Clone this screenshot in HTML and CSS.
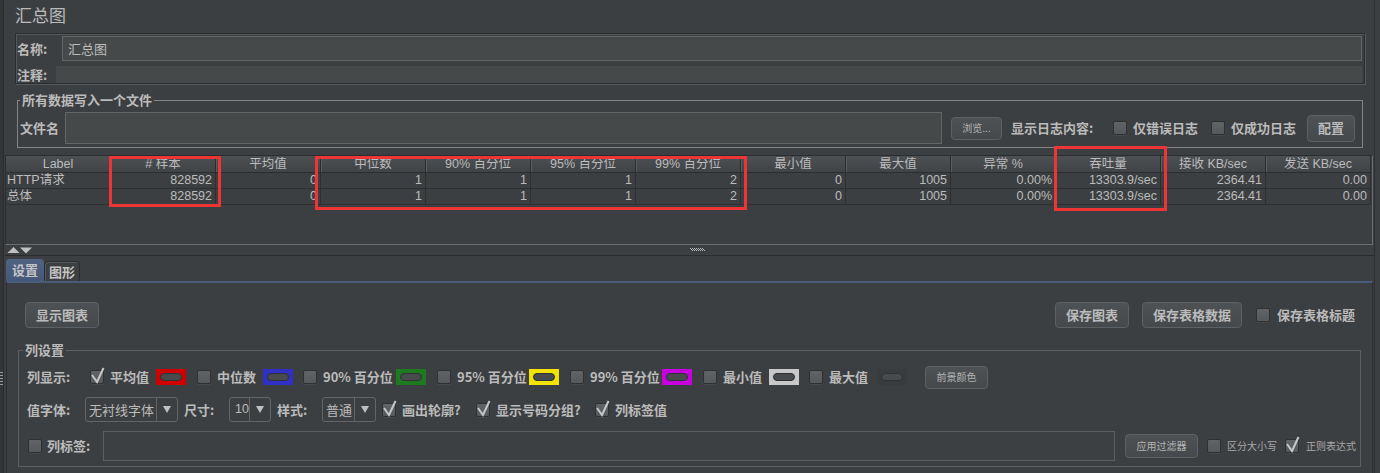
FILE: index.html
```html
<!DOCTYPE html>
<html lang="zh-CN">
<head>
<meta charset="utf-8">
<title>汇总图</title>
<link rel="stylesheet" href="styles.css">
</head>
<body>
<div class="app">
  <div class="lstrip">
    <svg class="lgrip" width="3" height="15" viewBox="0 0 3 15"><rect x="0" y="0" width="3" height="1" fill="#9a9a9a"/><rect x="0" y="3" width="3" height="1" fill="#9a9a9a"/><rect x="0" y="6" width="3" height="1" fill="#9a9a9a"/><rect x="0" y="9" width="3" height="1" fill="#9a9a9a"/><rect x="0" y="12" width="3" height="1" fill="#9a9a9a"/></svg>
  </div>
  <div class="main">
    <div class="title">汇总图</div>

    <div class="name-panel">
      <div class="nrow">
        <span class="lbl lbl-name">名称:</span>
        <div class="field field-name">汇总图</div>
      </div>
      <div class="nrow nrow-comment">
        <span class="lbl lbl-comment">注释:</span>
        <div class="field field-comment"></div>
      </div>
    </div>

    <fieldset class="group group-file">
      <legend>所有数据写入一个文件</legend>
      <div class="file-row">
        <span class="lbl lbl-file">文件名</span>
        <div class="field field-file"></div>
        <button class="btn btn-small btn-browse">浏览...</button>
        <span class="lbl lbl-log">显示日志内容:</span>
        <span class="cb"></span><span class="lbl opt-text w78">仅错误日志</span>
        <span class="cb"></span><span class="lbl opt-text w76">仅成功日志</span>
        <button class="btn btn-config">配置</button>
      </div>
    </fieldset>

    <div class="table-pane">
      <div class="trow">
        <div class="th">Label</div>
        <div class="th"># 样本</div>
        <div class="th">平均值</div>
        <div class="th">中位数</div>
        <div class="th">90% 百分位</div>
        <div class="th">95% 百分位</div>
        <div class="th">99% 百分位</div>
        <div class="th">最小值</div>
        <div class="th">最大值</div>
        <div class="th">异常 %</div>
        <div class="th">吞吐量</div>
        <div class="th">接收 KB/sec</div>
        <div class="th">发送 KB/sec</div>
      </div>
      <div class="trow">
        <div class="td left">HTTP请求</div>
        <div class="td">828592</div>
        <div class="td">0</div>
        <div class="td">1</div>
        <div class="td">1</div>
        <div class="td">1</div>
        <div class="td">2</div>
        <div class="td">0</div>
        <div class="td">1005</div>
        <div class="td">0.00%</div>
        <div class="td">13303.9/sec</div>
        <div class="td">2364.41</div>
        <div class="td">0.00</div>
      </div>
      <div class="trow">
        <div class="td left">总体</div>
        <div class="td">828592</div>
        <div class="td">0</div>
        <div class="td">1</div>
        <div class="td">1</div>
        <div class="td">1</div>
        <div class="td">2</div>
        <div class="td">0</div>
        <div class="td">1005</div>
        <div class="td">0.00%</div>
        <div class="td">13303.9/sec</div>
        <div class="td">2364.41</div>
        <div class="td">0.00</div>
      </div>
    </div>

    <div class="splitter">
      <svg class="arrows" width="26" height="7" viewBox="0 0 26 7"><polygon points="0.5,6 6.5,0 12.5,6" fill="#c0c0c0"/><polygon points="13,0.5 25,0.5 19,6.5" fill="#c0c0c0"/></svg>
      <svg class="grip" width="16" height="4" viewBox="0 0 16 4"><path d="M0 0 L3 3 M2 0 L5 3 M4 0 L7 3 M6 0 L9 3 M8 0 L11 3 M10 0 L13 3 M12 0 L15 3" stroke="#d0d0d0" stroke-width="0.8" fill="none"/></svg>
    </div>

    <div class="tabs">
      <div class="tab tab-active">设置</div>
      <div class="tab tab-inactive">图形</div>
    </div>

    <div class="tab-body">
      <div class="top-row">
        <button class="btn btn-show">显示图表</button>
        <div class="right-group">
          <button class="btn btn-save-chart">保存图表</button>
          <button class="btn btn-save-table">保存表格数据</button>
          <span class="cb ml14"></span><span class="lbl opt-text ml7">保存表格标题</span>
        </div>
      </div>

      <fieldset class="group group-cols">
        <legend>列设置</legend>
        <div class="crow crow1">
          <span class="lbl w63">列显示:</span>
          <span class="cb checked"><svg class="ck" width="16" height="18" viewBox="0 0 16 18"><path d="M2 8 L7 15 L13.5 1" fill="none" stroke="#c6c6c6" stroke-width="2"/></svg></span><span class="lbl opt-text w46">平均值</span>
          <span class="swatch sw-red"><i class="pill"></i></span>
          <span class="cb ml11"></span><span class="lbl opt-text w46">中位数</span>
          <span class="swatch sw-blue"><i class="pill"></i></span>
          <span class="cb ml10"></span><span class="lbl opt-text w73">90% 百分位</span>
          <span class="swatch sw-green"><i class="pill"></i></span>
          <span class="cb ml11"></span><span class="lbl opt-text w72">95% 百分位</span>
          <span class="swatch sw-yellow"><i class="pill"></i></span>
          <span class="cb ml11"></span><span class="lbl opt-text w72">99% 百分位</span>
          <span class="swatch sw-purple"><i class="pill"></i></span>
          <span class="cb ml11"></span><span class="lbl opt-text w46">最小值</span>
          <span class="swatch sw-gray"><i class="pill"></i></span>
          <span class="cb ml10"></span><span class="lbl opt-text w48">最大值</span>
          <span class="swatch sw-none"><i class="pill"></i></span>
          <button class="btn btn-small btn-fg">前景颜色</button>
        </div>
        <div class="crow crow2">
          <span class="lbl w58">值字体:</span>
          <span class="combo w93"><span class="combo-text">无衬线字体</span><span class="combo-arrow"><svg width="8" height="7" viewBox="0 0 8 7"><polygon points="0,0 8,0 4,7" fill="#c0c0c0"/></svg></span></span>
          <span class="lbl ml6 w45">尺寸:</span>
          <span class="combo w42"><span class="combo-text num">10</span><span class="combo-arrow"><svg width="8" height="7" viewBox="0 0 8 7"><polygon points="0,0 8,0 4,7" fill="#c0c0c0"/></svg></span></span>
          <span class="lbl ml6 w45">样式:</span>
          <span class="combo w54"><span class="combo-text">普通</span><span class="combo-arrow"><svg width="8" height="7" viewBox="0 0 8 7"><polygon points="0,0 8,0 4,7" fill="#c0c0c0"/></svg></span></span>
          <span class="cb checked ml6"><svg class="ck" width="16" height="18" viewBox="0 0 16 18"><path d="M2 8 L7 15 L13.5 1" fill="none" stroke="#c6c6c6" stroke-width="2"/></svg></span><span class="lbl opt-text w74">画出轮廓?</span>
          <span class="cb checked"><svg class="ck" width="16" height="18" viewBox="0 0 16 18"><path d="M2 8 L7 15 L13.5 1" fill="none" stroke="#c6c6c6" stroke-width="2"/></svg></span><span class="lbl opt-text w99">显示号码分组?</span>
          <span class="cb checked"><svg class="ck" width="16" height="18" viewBox="0 0 16 18"><path d="M2 8 L7 15 L13.5 1" fill="none" stroke="#c6c6c6" stroke-width="2"/></svg></span><span class="lbl opt-text">列标签值</span>
        </div>
        <div class="crow crow3">
          <span class="cb ml1"></span><span class="lbl ml5 w56">列标签:</span>
          <div class="field field-label"></div>
          <button class="btn btn-small btn-filter">应用过滤器</button>
          <span class="cb ml9"></span><span class="small-text ml6 w58">区分大小写</span>
          <span class="cb checked"><svg class="ck" width="16" height="18" viewBox="0 0 16 18"><path d="M2 8 L7 15 L13.5 1" fill="none" stroke="#c6c6c6" stroke-width="2"/></svg></span><span class="small-text ml7">正则表达式</span>
        </div>
      </fieldset>
    </div>

    <div class="redbox rb1"></div>
    <div class="redbox rb2"></div>
    <div class="redbox rb3"></div>
  </div>
  <div class="rstrip"></div>
</div>
</body>
</html>
```

FILE: styles.css
```css
* { box-sizing: border-box; }
html, body { margin: 0; padding: 0; }
body {
  width: 1380px; height: 473px; overflow: hidden;
  background: #3c3f41; color: #bbbbbb;
  font-family: "Noto Sans CJK SC", "Liberation Sans", sans-serif;
  font-size: 13px; line-height: 16px;
}
.app { display: flex; height: 473px; }
.lstrip { width: 4px; flex: none; background: #333537; border-right: 1px solid #2a2c2e; padding-top: 372px; }
.lgrip { display: block; }
.main { width: 1370px; flex: none; position: relative; }
.rstrip { width: 6px; flex: none; border-left: 1px solid #2c2e30; }

.title { height: 33px; padding: 5px 0 0 11px; font-size: 17px; line-height: 20px; }

.name-panel {
  margin-left: 11px; width: 1350px; height: 51px;
  border: 1px solid #2b2d2f;
  box-shadow: inset 1px 1px 0 #55585a, 1px 1px 0 #55585a;
  padding: 2px 0 0 0;
}
.nrow { display: flex; align-items: center; height: 25px; }
.nrow-comment { height: 17px; margin-top: 5px; }
.lbl { font-weight: bold; white-space: nowrap; flex: none; }
.lbl-name { width: 46px; padding-left: 1px; }
.lbl-comment { width: 40px; padding-left: 1px; }
.field { flex: none; background: #45494a; border: 1px solid #646464; height: 100%; }
.field-name { width: 1300px; padding-left: 5px; line-height: 23px; }
.field-comment { width: 1306px; border: none; }

.group { margin: 0; padding: 0; min-width: 0; border: 1px solid #858585; }
.group legend { padding: 0 2px; margin-left: 2px; font-weight: bold; line-height: 14px; font-size: 13px; }
.group-file { margin: 9px 0 0 13px; width: 1346px; padding: 5px 0 3px 0; }
.file-row { display: flex; align-items: center; height: 32px; padding-left: 2px; }
.lbl-file { width: 45px; }
.field-file { width: 877px; }
.lbl-log { width: 102px; margin-left: 9px; }

.btn {
  flex: none; display: flex; align-items: center; justify-content: center;
  padding: 0; margin: 0;
  font-family: "Noto Sans CJK SC", "Liberation Sans", sans-serif;
  font-size: 13px; font-weight: bold; line-height: 16px; color: #bbbbbb;
  background: linear-gradient(#4e5255, #45494b);
  border: 1px solid #5e6163; border-radius: 4px;
}
.btn-small { font-size: 10px; font-weight: normal; color: #b4b4b4; }
.btn-browse { width: 51px; height: 23px; margin-left: 9px; }
.btn-config { width: 48px; height: 27px; }
.btn-show { width: 74px; height: 26px; }
.btn-save-chart { width: 74px; height: 26px; }
.btn-save-table { width: 100px; height: 26px; margin-left: 13px; }
.btn-fg { width: 63px; height: 23px; margin-left: 18px; }
.btn-filter { width: 73px; height: 24px; margin-left: 10px; }

.cb {
  flex: none; position: relative; width: 14px; height: 14px;
  background: linear-gradient(#616467, #56595b);
  border: 1px solid #2e3032; border-radius: 2px;
  box-shadow: 0 1px 0 #46494b;
}
.ck { position: absolute; left: -1px; top: -4px; }
.opt-text { margin-left: 6px; }

.table-pane {
  margin: 7px 0 0 1px; width: 1368px; height: 90px;
  border: 1px solid; border-color: #2b2d2f #6a6d6f #6a6d6f #2b2d2f;
  font-family: "Liberation Sans", "Noto Sans CJK SC", sans-serif; font-size: 12.5px;
}
.trow { display: grid; grid-template-columns: repeat(13, 105px); }
.th {
  height: 17px; line-height: 16px; text-align: center; white-space: nowrap; overflow: hidden;
  background: linear-gradient(#4c5053, #414447);
  border-right: 1px solid #2b2d2f; border-bottom: 1px solid #2b2d2f;
  box-shadow: inset 1px 0 0 #5a5d60;
}
.th:first-child { box-shadow: none; }
.td {
  height: 16px; line-height: 15px; text-align: right; padding-right: 3px; white-space: nowrap;
  border-right: 1px solid #2d2f31; border-bottom: 1px solid #2d2f31;
}
.td.left { text-align: left; padding-left: 1px; }

.splitter {
  margin-left: 1px; width: 1369px; height: 11px;
  border-bottom: 1px solid #2a2c2e;
  display: flex; align-items: flex-start; padding: 2px 0 0 2px;
}
.arrows { display: block; flex: none; }
.grip { display: block; flex: none; margin: 1px 0 0 657px; }

.tabs { display: flex; align-items: flex-end; height: 25px; margin-left: 2px; }
.tab { font-weight: bold; display: flex; align-items: center; justify-content: center; border-radius: 4px 4px 0 0; color: #c4c4c4; }
.tab-active { width: 38px; height: 22px; background: linear-gradient(#506383, #46587a); }
.tab-inactive { width: 36px; height: 20px; border: 1px solid #2b2d2f; border-bottom: none; box-shadow: inset 1px 1px 0 #55585a; }

.tab-body {
  margin-left: 2px; width: 1367px; height: 192px;
  border-top: 2px solid #4a5c7c; border-left: 1px solid #2b2d2f; border-right: 1px solid #2b2d2f;
  padding: 19px 0 0 0;
}
.top-row { display: flex; justify-content: space-between; align-items: center; height: 26px; padding: 0 17px 0 18px; }
.right-group { display: flex; align-items: center; }

.group-cols { border-color: #5e6163; margin: 15px 0 0 11px; width: 1343px; padding: 8px 0 5px 0; }
.group-cols legend { margin-left: 4px; }
.crow { display: flex; align-items: center; padding-left: 8px; }
.crow1 { height: 24px; }
.crow2 { height: 25px; margin-top: 8px; }
.crow3 { height: 30px; margin-top: 9px; }

.swatch { flex: none; display: block; width: 30px; height: 16px; padding: 4px; }
.pill { display: block; height: 100%; border-radius: 4px; background: #474b4e; border: 1px solid #2f3133; }
.sw-red { background: #d00000; }
.sw-blue { background: #3030c4; }
.sw-green { background: #1e7a1e; }
.sw-yellow { background: #f2e400; }
.sw-purple { background: #c800e0; }
.sw-gray { background: #c8c8c8; }
.sw-none { background: #393b3d; }

.combo { flex: none; display: flex; height: 25px; border: 1px solid #646464; border-radius: 3px; }
.combo-text { flex: 1; padding-left: 3px; line-height: 23px; border-right: 1px solid #646464; white-space: nowrap; }
.combo-text.num { font-family: "Liberation Sans", sans-serif; font-size: 12.5px; padding-left: 5px; }
.combo-arrow { width: 20px; flex: none; display: flex; align-items: center; justify-content: center; }

.field-label { width: 1012px; background: #3d4042; border-color: #5e5e5e; }
.small-text { flex: none; font-size: 10px; color: #a8a8a8; white-space: nowrap; }

.w45 { width: 45px; } .w46 { width: 46px; } .w48 { width: 48px; } .w54 { width: 54px; }
.w56 { width: 56px; } .w58 { width: 58px; } .w63 { width: 63px; } .w72 { width: 72px; }
.w73 { width: 73px; } .w74 { width: 74px; } .w76 { width: 76px; } .w78 { width: 78px; }
.w93 { width: 93px; } .w99 { width: 99px; } .w42 { width: 42px; }
.ml1 { margin-left: 1px; } .ml5 { margin-left: 5px; } .ml6 { margin-left: 6px; } .ml7 { margin-left: 7px; }
.ml9 { margin-left: 9px; } .ml10 { margin-left: 10px; } .ml11 { margin-left: 11px; } .ml14 { margin-left: 14px; }

.redbox { position: absolute; border: 3px solid #ee3535; pointer-events: none; }
.rb1 { left: 105px; top: 156px; width: 112px; height: 51px; }
.rb2 { left: 311px; top: 156px; width: 432px; height: 54px; }
.rb3 { left: 1050px; top: 146px; width: 113px; height: 65px; }
```
